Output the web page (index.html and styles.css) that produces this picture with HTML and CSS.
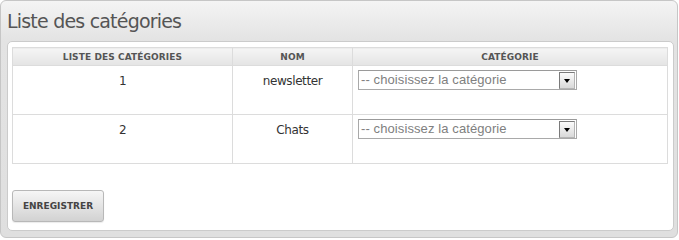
FILE: index.html
```html
<!DOCTYPE html>
<html lang="fr">
<head>
<meta charset="utf-8">
<title>Liste des catégories</title>
<link rel="stylesheet" href="styles.css">
</head>
<body>
<div class="frame">
  <h1 class="title">Liste des catégories</h1>
  <div class="panel">
    <table class="grid">
      <thead>
        <tr>
          <th class="c1">Liste des catégories</th>
          <th class="c2">Nom</th>
          <th class="c3">Catégorie</th>
        </tr>
      </thead>
      <tbody>
        <tr>
          <td class="c1">1</td>
          <td class="c2">newsletter</td>
          <td class="c3">
            <div class="select"><span class="select-text">-- choisissez la catégorie</span><span class="select-btn"><span class="tri"></span></span></div>
          </td>
        </tr>
        <tr>
          <td class="c1">2</td>
          <td class="c2">Chats</td>
          <td class="c3">
            <div class="select"><span class="select-text">-- choisissez la catégorie</span><span class="select-btn"><span class="tri"></span></span></div>
          </td>
        </tr>
      </tbody>
    </table>
    <div class="actions">
      <button class="btn" type="button">Enregistrer</button>
    </div>
  </div>
</div>
</body>
</html>
```

FILE: styles.css
```css
* { box-sizing: border-box; }

html, body {
  margin: 0;
  padding: 0;
  background: #ffffff;
}

body {
  font-family: "DejaVu Sans", Verdana, sans-serif;
  width: 679px;
  height: 239px;
  overflow: hidden;
}

.frame {
  width: 678px;
  height: 238px;
  border: 1px solid #c6c6c6;
  border-radius: 6px;
  background: linear-gradient(#f4f4f4 0px, #e3e3e3 40px, #dfdfdf 100%);
  padding: 0 5px 0 6px;
  display: flex;
  flex-direction: column;
}

.title {
  margin: 0;
  height: 40px;
  padding: 8px 0 0 0;
  font-weight: normal;
  font-size: 19px;
  line-height: 24px;
  letter-spacing: -0.8px;
  color: #555555;
}

.panel {
  width: 667px;
  height: 190px;
  background: #ffffff;
  border: 1px solid #cbcbcb;
  border-radius: 5px;
  padding: 5px 4px 0 4px;
}

.grid {
  border-collapse: collapse;
  width: 656px;
  table-layout: fixed;
}

.grid th, .grid td {
  border: 1px solid #dcdcdc;
  text-align: center;
  padding: 0;
}

.grid th {
  height: 18px;
  font-size: 9px;
  font-weight: bold;
  line-height: 16px;
  text-transform: uppercase;
  color: #555555;
  letter-spacing: 0.1px;
  background: linear-gradient(#f5f5f5, #e4e4e4);
}

.grid th.c1, .grid td.c1 { width: 220px; }
.grid th.c2, .grid td.c2 { width: 120px; }

.grid td {
  height: 49px;
  vertical-align: top;
  padding-top: 5px;
  font-size: 12px;
  line-height: 20px;
  letter-spacing: -0.4px;
  color: #333333;
}

.grid td.c3 {
  text-align: left;
  padding-left: 5px;
  padding-top: 4px;
}

.select {
  width: 219px;
  height: 20px;
  border: 1px solid #a9a9a9;
  border-top-color: #9a9a9a;
  background: #ffffff;
  display: flex;
  align-items: center;
  padding: 0 1px 0 2px;
}

.select-text {
  flex: 1;
  font-family: "Liberation Sans", Arial, sans-serif;
  font-size: 13px;
  line-height: 18px;
  letter-spacing: 0.1px;
  color: #808080;
  white-space: nowrap;
  overflow: hidden;
}

.select-btn {
  width: 16px;
  height: 17px;
  border: 1px solid #7a7a7a;
  border-right-color: #b5b5b5;
  border-bottom-color: #b5b5b5;
  background: linear-gradient(#fbfbfb, #d9d9d9);
  display: flex;
  align-items: center;
  justify-content: center;
}

.tri {
  width: 0;
  height: 0;
  border-left: 3.5px solid transparent;
  border-right: 3.5px solid transparent;
  border-top: 4px solid #000000;
  margin-top: 1px;
}

.actions {
  padding-top: 26px;
}

.btn {
  width: 92px;
  height: 32px;
  border: 1px solid #b8b8b8;
  border-radius: 3px;
  background: linear-gradient(#f6f6f6, #d2d2d2);
  box-shadow: 0 1px 1px rgba(0,0,0,0.08);
  font-family: "DejaVu Sans", Verdana, sans-serif;
  font-size: 9px;
  font-weight: bold;
  line-height: 30px;
  text-transform: uppercase;
  color: #444444;
  padding: 0;
  margin: 0;
  cursor: pointer;
}
```
